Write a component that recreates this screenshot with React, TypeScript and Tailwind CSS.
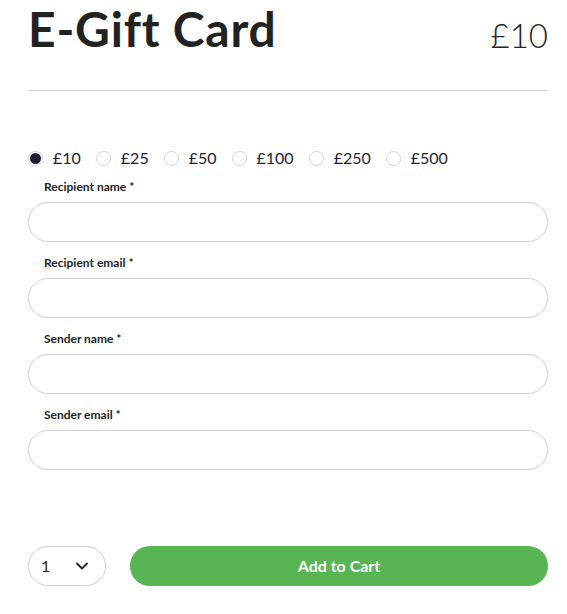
import React, { useState } from 'react';
import { ChevronDown } from 'lucide-react';

const amounts = ['£10', '£25', '£50', '£100', '£250', '£500'];
const fields = ['Recipient name', 'Recipient email', 'Sender name', 'Sender email'];

export default function App() {
  const [amount, setAmount] = useState('£10');

  return (
    <div className="min-h-screen bg-white pl-[28px] pr-[19px] text-[#222]" style={{ fontFamily: 'Lato, "Open Sans", sans-serif' }}>
      {/* Header */}
      <div className="flex items-start justify-between">
        <h1 className="text-[48px] font-bold leading-[58px] tracking-[0.8px] text-[#222]">E-Gift Card</h1>
        <span className="mt-[15px] text-[33px] font-light leading-[40px] text-[#222]">£10</span>
      </div>
      <div className="mt-[32px] h-px bg-[#cfcfcf]" />

      {/* Amounts */}
      <div className="mt-[57px] flex items-center gap-[15px]">
        {amounts.map((a) => (
          <label key={a} className="flex cursor-pointer items-center gap-[10px]" onClick={() => setAmount(a)}>
            <span className="flex h-[15px] w-[15px] items-center justify-center rounded-full border border-[#d4d4d4]">
              {amount === a && <span className="h-[11px] w-[11px] rounded-full bg-[#1c1d33]" />}
            </span>
            <span className="text-[16px] leading-[20px] text-[#1c1d33]">{a}</span>
          </label>
        ))}
      </div>

      {/* Fields */}
      <div className="mt-[11px] flex flex-col gap-[13px]">
        {fields.map((f) => (
          <div key={f} className="flex flex-col">
            <label className="pl-[16px] text-[12px] font-bold leading-[16px] text-[#222]">{f} *</label>
            <input className="mt-[7px] h-[40px] w-full rounded-full border border-[#cfcfcf] px-4 text-[14px] outline-none" />
          </div>
        ))}
      </div>

      {/* Bottom */}
      <div className="mt-[76px] flex items-center gap-[24px]">
        <div className="flex h-[40px] w-[78px] items-center justify-between rounded-full border border-[#cfcfcf] pl-[12px] pr-[13px]">
          <span className="text-[16px] text-[#3b1a1a]">1</span>
          <ChevronDown size={20} strokeWidth={2.2} className="text-[#222]" />
        </div>
        <button className="flex h-[40px] flex-1 items-center justify-center rounded-full bg-[#57b553] text-[16px] font-bold text-white">
          Add to Cart
        </button>
      </div>
    </div>
  );
}
